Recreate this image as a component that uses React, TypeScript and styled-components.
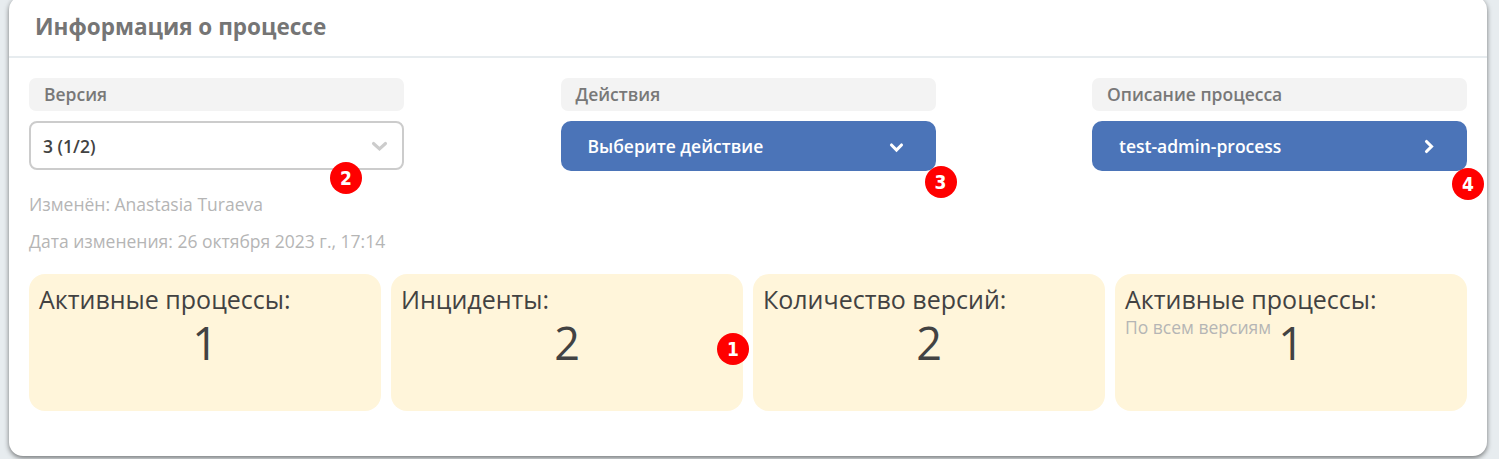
import React from "react";
import styled, { createGlobalStyle } from "styled-components";

const Global = createGlobalStyle`
  * { box-sizing: border-box; }
  html, body { margin: 0; height: 459px; overflow: hidden; background: #e7ecef; }
  body { font-family: "Open Sans", sans-serif; color: #424242; }
`;
const Page = styled.div`height: 459px; padding: 0 12px 3px 9px; overflow: hidden;`;
const Card = styled.main`height: 460px; margin-top: -4px; padding-top: 4px; background: #fff; border-radius: 14px; box-shadow: 0 2px 5px rgba(0,0,0,.5);`;
const Header = styled.header`height: 58px; padding: 10px 26px 0; border-bottom: 2px solid #e7ecef;`;
const Title = styled.h1`margin: 0; font-size: 22.5px; line-height: 34px; font-weight: 700; color: #757575;`;
const Body = styled.div`padding: 20px 20px 0;`;
const Controls = styled.div`display: flex; justify-content: space-between; height: 93px;`;
const Field = styled.section`width: 375px; position: relative;`;
const Label = styled.div`height: 33px; line-height: 33px; padding-left: 15px; background: #f3f3f3; border-radius: 7px; color: #787878; font-size: 17.5px; font-weight: 600;`;
const Select = styled.button<{ $primary?: boolean }>`
  width: 100%; height: ${p => p.$primary ? 50 : 49}px; margin-top: 10px; padding: 0 ${p => p.$primary ? 30 : 14}px 0 ${p => p.$primary ? 27 : 12}px;
  display: flex; align-items: center; justify-content: space-between; border-radius: ${p => p.$primary ? 10 : 8}px;
  border: ${p => p.$primary ? "0" : "2px solid #ccc"}; background: ${p => p.$primary ? "#4b74b8" : "#fff"};
  color: ${p => p.$primary ? "#fff" : "#424242"}; font: 600 17.5px "Open Sans", sans-serif;
`;
const Badge = styled.span<{ $x: number; $y: number }>`
  position: absolute; left: ${p => p.$x}px; top: ${p => p.$y}px; width: 32px; height: 32px; border-radius: 50%;
  background: #f00; color: #fff; text-align: center; font: 700 19px/32px "DejaVu Sans Condensed", "DejaVu Sans", sans-serif;
`;
const Meta = styled.p`margin: 0; height: 37px; line-height: 25px; font-size: 17.5px; color: #b5b5b5;`;
const MetaBlock = styled.div`padding-top: 21px; height: 103px;`;
const Stats = styled.div`display: grid; grid-template-columns: repeat(4, 352px); gap: 10px;`;
const Stat = styled.section`position: relative; height: 137px; padding: 8px 10px; border-radius: 16px; background: #fff5da;`;
const StatTitle = styled.div`font-size: 25px; line-height: 35px; color: #424242; white-space: nowrap;`;
const Value = styled.div`font-size: 45px; line-height: 52px; text-align: center; color: #424242;`;
const Note = styled.span`position: absolute; left: 10px; top: 41px; font-size: 17.5px; line-height: 24px; color: #b5b5b5;`;

const chevrons = {
  select: "M3.5 6.5l6 5.5 6-5.5",
  down: "M3.5 8l5 5 5-5",
  right: "M7.5 4.5l5 5-5 5",
};
const Chevron = ({ kind }: { kind: keyof typeof chevrons }) => (
  <svg width="18" height="18" viewBox="0 0 18 18" fill="none" stroke={kind === "select" ? "#ccc" : "#fff"} strokeWidth="3.1" strokeLinecap="round">
    <path d={chevrons[kind]} />
  </svg>
);

export default function App() {
  return <><Global /><Page><Card>
    <Header><Title>Информация о процессе</Title></Header>
    <Body>
      <Controls>
        <Field><Label>Версия</Label><Select>3 (1/2)<Chevron kind="select" /></Select><Badge $x={301} $y={84}>2</Badge></Field>
        <Field><Label>Действия</Label><Select $primary>Выберите действие<Chevron kind="down" /></Select><Badge $x={364} $y={88}>3</Badge></Field>
        <Field><Label>Описание процесса</Label><Select $primary>test-admin-process<Chevron kind="right" /></Select><Badge $x={360} $y={90}>4</Badge></Field>
      </Controls>
      <MetaBlock><Meta>Изменён: Anastasia Turaeva</Meta><Meta>Дата изменения: 26 октября 2023 г., 17:14</Meta></MetaBlock>
      <Stats>
        <Stat><StatTitle>Активные процессы:</StatTitle><Value>1</Value></Stat>
        <Stat><StatTitle>Инциденты:</StatTitle><Value>2</Value><Badge $x={326} $y={59}>1</Badge></Stat>
        <Stat><StatTitle>Количество версий:</StatTitle><Value>2</Value></Stat>
        <Stat><StatTitle>Активные процессы:</StatTitle><Note>По всем версиям</Note><Value>1</Value></Stat>
      </Stats>
    </Body>
  </Card></Page></>;
}
